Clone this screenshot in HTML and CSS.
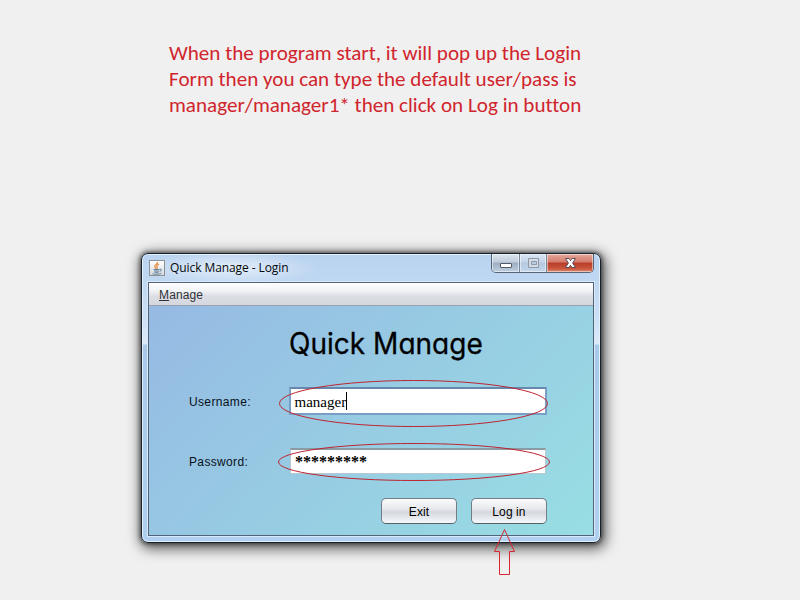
FILE: index.html
```html
<!DOCTYPE html>
<html lang="en">
<head>
<meta charset="utf-8">
<title>Quick Manage - Login</title>
<link rel="stylesheet" href="styles.css">
</head>
<body>
<main class="page">
  <p class="note">When the program start, it will pop up the Login<br>Form then you can type the default user/pass is<br>manager/manager1* then click on Log in button</p>
  <section class="window">
    <header class="titlebar">
      <svg class="java" width="16" height="16" viewBox="0 0 16 16">
        <defs><linearGradient id="jg" x1="0" y1="0" x2="0" y2="1"><stop offset="0" stop-color="#fff"/><stop offset="1" stop-color="#d3d9df"/></linearGradient></defs>
        <rect x=".5" y=".5" width="15" height="15" fill="url(#jg)" stroke="#8b9197"/>
        <path d="M8.700 2C9 4 5.500 4.700 5.700 6.500C5.800 7.500 6.800 7.700 7 8.800M10 4.300C7.500 5 7.200 6 8 7C8.400 7.600 8.300 8.200 7.800 8.800" fill="none" stroke="#e58a3c" stroke-width="1.200"/>
        <path d="M4.500 9.500H10.500M5 11H10M5.500 12.300H9.500M10.700 9.300C13.300 8.700 13 11 10.500 11.300M3.500 13.800C6 14.400 10 14.400 12.300 13.400" fill="none" stroke="#557791" stroke-width=".9"/>
      </svg>
      <h1 class="caption">Quick Manage - Login</h1>
      <div class="controls">
        <span class="ctl min"><svg width="27" height="18" viewBox="0 0 27 18"><rect x="8.500" y="9.500" width="11" height="4" rx=".5" fill="#fff" stroke="#535b68"/></svg></span>
        <span class="ctl max"><svg width="27" height="18" viewBox="0 0 27 18"><path d="M8.500 4.500H18.500V13.500H8.500ZM11.500 7.500V10.500H16.500V7.500Z" fill="#d3dce6" fill-rule="evenodd" stroke="#8d99a9"/></svg></span>
        <span class="ctl close"><svg width="47" height="18" viewBox="0 0 47 18"><path d="M18.500 4.500H22L23.500 6.500L25 4.500H28.500L25.600 9L28.500 13.500H25L23.500 11.300L22 13.500H18.500L21.400 9Z" fill="#fff" stroke="#5d4c57"/></svg></span>
      </div>
    </header>
    <div class="client">
      <nav class="menubar"><u>M</u>anage</nav>
      <div class="form">
        <h2 class="brand">Quick Manage</h2>
        <div class="row user"><label>Username:</label><div class="field">manager<i class="caret"></i></div></div>
        <div class="row pass"><label>Password:</label><div class="field">*********</div></div>
        <div class="actions"><button>Exit</button><button>Log in</button></div>
      </div>
    </div>
  </section>
  <svg class="marks" width="800" height="600" viewBox="0 0 800 600" fill="none" stroke="#bd2530">
    <ellipse cx="413.500" cy="403.500" rx="134" ry="23"/>
    <ellipse cx="414" cy="462" rx="135.500" ry="18.500"/>
    <path d="M504.500 529.500L514.500 551.500H509.500V574.500H499.500V551.500H494.500Z" stroke="#d52732"/>
  </svg>
</main>
</body>
</html>
```
FILE: styles.css
```css
* { box-sizing: border-box; }
body { margin: 0; background: #f0f0f0; font-family: "Liberation Sans", Arial, sans-serif; }
.page { position: relative; width: 800px; height: 600px; overflow: hidden; display: flex; flex-direction: column; padding: 40px 0 0 141px; }
.note { margin: 0 0 0 28px; height: 213px; font: 21.1px/26px Carlito, Lato, sans-serif; font-variant-ligatures: none; color: #d0252d; white-space: nowrap; }
.window {
  width: 460px; height: 290px; padding: 0 6px 7px; border: 1px solid #17212e; border-radius: 7px;
  background: linear-gradient(#b9d2ef, #c0d8f2 30px, #c9dff5 60px, #dceaf8 90px, #a9c9ea 91px, #b0d0f1 100%);
  box-shadow: inset 0 0 0 1px #e4f1fc, 0 0 4px 1px rgba(0,0,0,.55), 2px 3px 13px 3px rgba(0,0,0,.6);
}
.titlebar { height: 28px; display: flex; align-items: flex-start; margin: 0 -6px; padding: 0 6px 0 7px; background: radial-gradient(ellipse 90px 16px at 88px 14px, rgba(255,255,255,.6), rgba(255,255,255,0)); }
.java { margin-top: 6px; }
.caption { margin: 5px 0 0 5px; flex: 1; font: 12px/18px "Open Sans", sans-serif; letter-spacing: -.08px; color: #05080c; white-space: nowrap; }
.controls { display: flex; width: 103px; height: 19px; border: 1px solid #566476; border-top: 0; border-radius: 0 0 5px 5px; overflow: hidden; }
.ctl { flex: none; height: 18px; background: linear-gradient(#dbe5ef, #c0ccda 45%, #9daec2 50%, #bfcfe0); box-shadow: inset 0 0 0 1px rgba(255,255,255,.5); }
.ctl svg { display: block; }
.min { width: 28px; border-right: 1px solid #76869a; }
.max { width: 27px; border-right: 1px solid #76869a; background: linear-gradient(#d7e4f2, #c5d5e7 45%, #b4c8df 50%, #c4d7ec); }
.close { width: 46px; background: linear-gradient(#e5a99d, #d47b6c 45%, #b93d28 50%, #c7553c 80%, #dc8970); }
.client { height: 254px; border: 1px solid #526477; box-shadow: 0 0 0 1px #d9e9f9; display: flex; flex-direction: column; }
.menubar { height: 23px; padding-left: 10px; font-size: 12px; line-height: 25px; letter-spacing: .12px; color: #30323a; background: linear-gradient(#fff, #f2f3f6 35%, #dcdee4 60%, #d4d7de); border-bottom: 1px solid #9ba2af; }
.form { flex: 1; display: flex; flex-direction: column; background: linear-gradient(135deg, #96bae3, #98dee3); }
.brand { margin: 18px 0 0 140px; height: 39px; font: 400 29.5px/38px "Comic Sans MS", Inter, sans-serif; font-feature-settings: "cv11"; white-space: nowrap; color: #000; -webkit-text-stroke: .3px #000; transform: scaleX(.95); transform-origin: left; }
.row { display: flex; align-items: center; padding-left: 40px; height: 28px; font-size: 12px; color: #07121b; }
.row label { width: 100px; padding-top: 1px; letter-spacing: .35px; }
.user { margin-top: 24px; }
.pass { margin-top: 32px; }
.field { display: flex; align-items: center; width: 258px; height: 28px; padding: 2px 0 0 3.5px; background: #fff; border: 2px solid #799fc6; border-top-color: #6688af; font: 15px "Liberation Serif", serif; color: #000; }
.pass .field { width: 256px; height: 26px; margin-left: 1px; border: 1px solid #b8c7d0; border-top: 2px solid #8b9ba6; font-size: 16px; font-weight: bold; padding: 0 0 0 4px; }
.caret { width: 1px; height: 18px; margin-top: -2px; background: #000; }
.actions { display: flex; gap: 14px; margin: 23px 0 0 232px; }
button { width: 76px; height: 26px; padding: 1px 0 0; border: 1px solid #747c85; border-bottom-color: #565e66; border-radius: 5px; background: linear-gradient(#fbfbfc, #e7e9ed 40%, #d5d8df 55%, #f5f8fb); font: 12px "Liberation Sans", sans-serif; letter-spacing: .1px; color: #000; }
.marks { position: absolute; left: 0; top: 0; }
```
